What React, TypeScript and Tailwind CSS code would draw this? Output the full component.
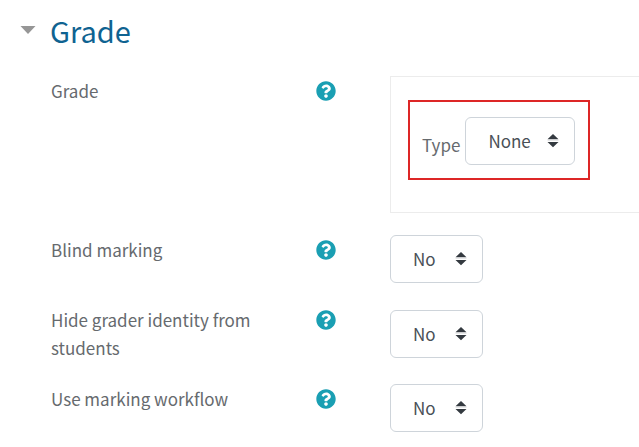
import React, { useState } from 'react';

interface SelectFieldProps {
  id: string;
  options: string[];
  className: string;
}

const SelectField: React.FC<SelectFieldProps> = ({ id, options, className }) => {
  const [value, setValue] = useState(options[0]);

  return (
    <div className={`relative h-12 shrink-0 ${className}`}>
      <select
        id={id}
        value={value}
        onChange={(e) => setValue(e.target.value)}
        className="h-full w-full appearance-none rounded-md border border-[#ced4da] bg-white pl-[22px] pr-8 text-[#495057] outline-none focus:border-[#1a9fb3]"
      >
        {options.map((option) => (
          <option key={option}>{option}</option>
        ))}
      </select>
      <svg
        className="pointer-events-none absolute right-4 top-4 h-4 w-3"
        viewBox="0 0 12 16"
        fill="#343a40"
        aria-hidden="true"
      >
        <path d="M6 1L11.5 6.3H0.5ZM0.5 9H11.5L6 14.3Z" />
        <path d="M0.5 7.2H11.5V8H0.5Z" opacity="0.15" />
      </svg>
    </div>
  );
};

const HelpButton: React.FC<{ topic: string }> = ({ topic }) => (
  <button type="button" aria-label={`Help with ${topic}`} className="mt-1 h-5 w-5 shrink-0 cursor-pointer">
    <svg viewBox="0 0 512 512" className="h-full w-full" fill="#1a9fb3">
      <path d="M504 256c0 137-111 248-248 248S8 393 8 256C8 119 119 8 256 8s248 111 248 248zM262.700 90c-54.500 0-89.300 23-116.500 63.800-3.500 5.300-2.400 12.400 2.700 16.300l34.700 26.300c5.200 3.900 12.600 3 16.700-2.100 17.900-22.700 30.100-35.800 57.300-35.800 20.400 0 45.700 13.100 45.700 33 0 15-12.400 22.700-32.500 34C247.100 238.500 216 255 216 296v4c0 6.600 5.400 12 12 12h56c6.600 0 12-5.400 12-12v-1.300c0-28.500 83.200-29.600 83.200-106.700 0-58-60.200-102-116.500-102zM256 338c-25.400 0-46 20.600-46 46s20.600 46 46 46 46-20.600 46-46-20.600-46-46-46z" />
    </svg>
  </button>
);

interface FormRowProps {
  label: string;
  htmlFor: string;
  children: React.ReactNode;
}

const FormRow: React.FC<FormRowProps> = ({ label, htmlFor, children }) => (
  <div className="flex">
    <div className="flex w-[339px] shrink-0 items-start pt-px">
      <label htmlFor={htmlFor} className="w-[265px] pr-8 leading-7">
        {label}
      </label>
      <HelpButton topic={label} />
    </div>
    <div className="flex min-w-0 flex-1 items-center">{children}</div>
  </div>
);

const yesNoRows = [
  { id: 'blind-marking', label: 'Blind marking' },
  { id: 'hide-grader', label: 'Hide grader identity from students' },
  { id: 'marking-workflow', label: 'Use marking workflow' },
];

export default function App() {
  const [open, setOpen] = useState(true);

  return (
    <main className="overflow-hidden bg-white pb-4 pt-2.5 font-['Noto_Sans_CJK_SC',sans-serif] text-[17px] text-[#666a6e]">
      <h2 className="text-[29px] leading-10 text-[#0f6391]">
        <button
          type="button"
          aria-expanded={open}
          onClick={() => setOpen(!open)}
          className="flex cursor-pointer items-center gap-3.5 pl-5"
        >
          <svg className={`h-2 w-4 ${open ? '' : '-rotate-90'}`} viewBox="0 0 16 8" fill="#969696" aria-hidden="true">
            <path d="M0.500 0H15.500L8 8Z" />
          </svg>
          Grade
        </button>
      </h2>

      {open && (
        <form className="mt-[26px] flex flex-col gap-[22px] pl-[51px]">
          <FormRow label="Grade" htmlFor="grade-type">
            {/* Runs off the right edge, so there is no right border */}
            <div className="flex flex-1 items-start border-y border-l border-[#ececec] pb-[32px] pl-[17px] pt-[23px]">
              <div className="flex items-start gap-[5px] border-2 border-[#dd2626] pb-[13px] pl-3 pr-[13px] pt-[15px]">
                <label htmlFor="grade-type" className="pt-3.5 leading-7">
                  Type
                </label>
                <SelectField id="grade-type" options={['None', 'Point', 'Scale']} className="w-[110px]" />
              </div>
            </div>
          </FormRow>

          {yesNoRows.map((row) => (
            <FormRow key={row.id} label={row.label} htmlFor={row.id}>
              <SelectField id={row.id} options={['No', 'Yes']} className="w-[93px]" />
            </FormRow>
          ))}
        </form>
      )}
    </main>
  );
}
